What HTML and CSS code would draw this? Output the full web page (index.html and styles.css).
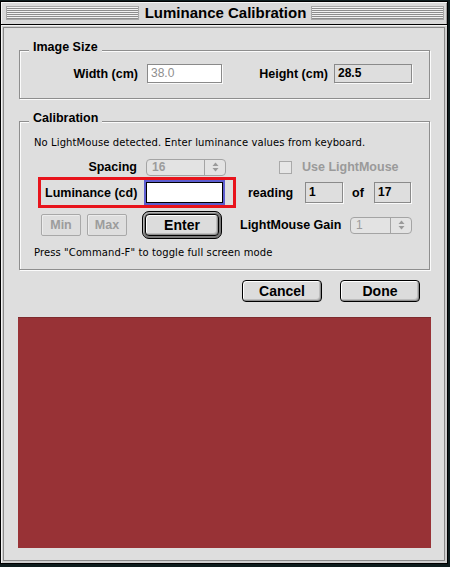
FILE: index.html
```html
<!DOCTYPE html>
<html>
<head>
<meta charset="utf-8">
<title>Luminance Calibration</title>
<link rel="stylesheet" href="styles.css">
</head>
<body>
<div class="window">
  <div class="titlebar">
    <div class="stripes"></div>
    <div class="title">Luminance Calibration</div>
    <div class="stripes"></div>
  </div>
  <div class="frame">
    <div class="panel">
      <fieldset class="group group-size">
        <legend>Image Size</legend>
        <div class="size-body">
          <span class="lbl lbl-width">Width (cm)</span>
          <div class="field field-white field-dim">38.0</div>
          <span class="lbl lbl-height">Height (cm)</span>
          <div class="field field-height">28.5</div>
        </div>
      </fieldset>

      <fieldset class="group group-cal">
        <legend>Calibration</legend>
        <div class="cal-body">
          <p class="note">No LightMouse detected. Enter luminance values from keyboard.</p>

          <div class="row row-spacing">
            <span class="lbl lbl-spacing">Spacing</span>
            <div class="popup popup-spacing">
              <span class="popup-val">16</span>
              <span class="popup-arrows">
                <svg width="7" height="10" viewBox="0 0 7 10"><polygon points="0.5,4 3.5,0.5 6.5,4" fill="#9a9a9a"/><polygon points="0.5,6 3.5,9.5 6.5,6" fill="#9a9a9a"/></svg>
              </span>
            </div>
            <span class="checkbox"></span>
            <span class="lbl lbl-dim">Use LightMouse</span>
          </div>

          <div class="row row-lum">
            <div class="highlight">
              <span class="lbl lbl-lum">Luminance (cd)</span>
              <div class="field field-focus"></div>
            </div>
            <span class="lbl lbl-reading">reading</span>
            <div class="field field-num field-one">1</div>
            <span class="lbl lbl-of">of</span>
            <div class="field field-num field-total">17</div>
          </div>

          <div class="row row-buttons">
            <button class="btn btn-disabled btn-min">Min</button>
            <button class="btn btn-disabled btn-max">Max</button>
            <div class="default-ring"><button class="btn btn-enter">Enter</button></div>
            <span class="lbl lbl-gain">LightMouse Gain</span>
            <div class="popup popup-gain">
              <span class="popup-val popup-val-thin">1</span>
              <span class="popup-arrows">
                <svg width="7" height="10" viewBox="0 0 7 10"><polygon points="0.5,4 3.5,0.5 6.5,4" fill="#9a9a9a"/><polygon points="0.5,6 3.5,9.5 6.5,6" fill="#9a9a9a"/></svg>
              </span>
            </div>
          </div>

          <p class="note note-last">Press "Command-F" to toggle full screen mode</p>
        </div>
      </fieldset>

      <div class="actions">
        <button class="btn btn-action">Cancel</button>
        <button class="btn btn-action">Done</button>
      </div>

      <div class="preview"></div>
    </div>
  </div>
</div>
</body>
</html>
```

FILE: styles.css
```css
* { box-sizing: border-box; }

html, body {
  margin: 0;
  padding: 0;
}

body {
  width: 450px;
  height: 567px;
  overflow: hidden;
  background: #0e1c1d;
  font-family: "Liberation Sans", Arial, sans-serif;
  color: #000;
}

.window {
  margin-top: 1px;
  width: 448px;
  height: 563px;
  border: 1px solid #000;
  background: #dcdcdc;
  display: flex;
  flex-direction: column;
}

/* ---------- title bar ---------- */
.titlebar {
  height: 23px;
  flex: none;
  display: flex;
  align-items: center;
  padding: 0 3px 0 5px;
  border-bottom: 1px solid #000;
  background: #d9d9d9;
  box-shadow: inset 1px 1px 0 #f6f6f6, inset -1px 0 0 #a0a0a0;
}

.stripes {
  flex: 1;
  height: 14px;
  border: 1px solid #a8a8a8;
  background: repeating-linear-gradient(to bottom, #f2f2f2 0 1px, #8e8e8e 1px 2px);
}

.title {
  padding: 0 5px 0 6px;
  font: bold 15px/20px "Liberation Sans", Arial, sans-serif;
  white-space: nowrap;
}

/* ---------- frame & panel ---------- */
.frame {
  flex: 1;
  display: flex;
  padding: 2px;
  background: #cfcfcf;
  box-shadow: inset 1px 1px 0 #f4f4f4;
}

.panel {
  flex: 1;
  display: flex;
  flex-direction: column;
  border: 1px solid #8a8a8a;
  background: #dedede;
}

/* ---------- group boxes ---------- */
.group {
  margin: 0 14px 0 15px;
  padding: 0;
  min-inline-size: 0;
  border: 1px solid #8e8e8e;
  box-shadow: 1px 1px 0 #fbfbfb, inset 1px 1px 0 #fbfbfb;
}

.group legend {
  margin-left: 9px;
  padding: 0 4px 6px;
  background: #dedede;
  font: bold 12.5px/14px "Liberation Sans", Arial, sans-serif;
}

.group-size { margin-top: 12px; }
.group-cal { margin-top: 12px; }

.size-body {
  display: flex;
  align-items: center;
  padding: 4px 0 15px;
}

.lbl {
  font: bold 12.5px/14px "Liberation Sans", Arial, sans-serif;
  white-space: nowrap;
}

.lbl-width {
  width: 118px;
  text-align: right;
  margin-right: 9px;
}

.lbl-height {
  width: 106px;
  text-align: right;
  margin-right: 6px;
}

/* ---------- text fields ---------- */
.field {
  height: 19px;
  border: 1px solid #8a8a8a;
  box-shadow: 1px 1px 0 #fafafa;
  padding-left: 3px;
  font: bold 12px/17px "Liberation Sans", Arial, sans-serif;
  background: #dedede;
}

.field-white {
  width: 75px;
  background: #fff;
}

.field-dim {
  color: #8e8e8e;
  font-weight: normal;
}

.field-height { width: 78px; }

.field-num {
  height: 21px;
  line-height: 19px;
}

.field-one { width: 38px; }
.field-total { width: 37px; }

.field-focus {
  width: 77px;
  height: 21px;
  background: #fff;
  border: 1px solid #000;
  box-shadow: 0 0 0 2px #5d5dcf;
}

/* ---------- calibration ---------- */
.cal-body { padding: 5px 0 9px; }

.note {
  margin: 0 0 0 14px;
  font: 10px/14px "DejaVu Sans", Verdana, sans-serif;
  letter-spacing: 0.1px;
  white-space: nowrap;
}

.note-last { margin-top: 7px; }

.row {
  display: flex;
  align-items: center;
}

.row-spacing {
  height: 20px;
  margin-top: 7px;
}

.lbl-spacing {
  width: 117px;
  text-align: right;
  margin-right: 9px;
}

.popup {
  display: flex;
  height: 17px;
  border: 1px solid #a4a4a4;
  border-radius: 4px;
  background: #e3e3e3;
}

.popup-spacing { width: 80px; }
.popup-gain { width: 62px; }

.popup-val {
  flex: 1;
  padding-left: 5px;
  font: bold 12px/15px "Liberation Sans", Arial, sans-serif;
  color: #9c9c9c;
}

.popup-val-thin { font-weight: normal; }

.popup-arrows {
  width: 21px;
  border-left: 1px solid #a4a4a4;
  display: flex;
  align-items: center;
  justify-content: center;
}

.checkbox {
  width: 13px;
  height: 13px;
  margin-left: 53px;
  margin-right: 10px;
  border: 1px solid #a9a9a9;
  background: #e6e6e6;
}

.lbl-dim { color: #9a9a9a; }

.highlight {
  display: flex;
  align-items: center;
  width: 198px;
  margin-left: 18px;
  padding: 2px 10px 2px 4px;
  border: 3px solid #e8141c;
}

.lbl-lum {
  flex: 1;
  text-align: right;
  margin-right: 9px;
}

.lbl-reading {
  width: 57px;
  margin-left: 12px;
}

.lbl-of {
  width: 31px;
  padding-left: 9px;
}

/* ---------- buttons ---------- */
.row-buttons { margin-top: 3px; }

.btn {
  height: 22px;
  padding: 0;
  border: 1px solid #000;
  border-radius: 4px;
  background: #dcdcdc;
  box-shadow: inset 1px 1px 0 #fff, inset -1px -1px 0 #8e8e8e, inset -2px -2px 0 #bdbdbd;
  font: bold 14px/20px "Liberation Sans", Arial, sans-serif;
  color: #000;
}

.btn-disabled {
  width: 40px;
  border-color: #a8a8a8;
  border-radius: 2px;
  background: #dedede;
  box-shadow: inset 1px 1px 0 #ececec;
  color: #9c9c9c;
  font-size: 12.5px;
}

.btn-min { margin-left: 21px; }
.btn-max { margin-left: 6px; }

.default-ring {
  display: flex;
  margin-left: 15px;
  padding: 2px;
  border: 1px solid #000;
  border-radius: 7px;
  background: #7a7a7a;
  box-shadow: inset 1px 1px 0 #b4b4b4;
}

.btn-enter { width: 74px; }

.lbl-gain {
  width: 110px;
  margin-left: 18px;
}

/* ---------- actions ---------- */
.actions {
  display: flex;
  justify-content: flex-end;
  gap: 18px;
  margin: 10px 24px 0 0;
}

.btn-action { width: 80px; }

/* ---------- preview ---------- */
.preview {
  height: 231px;
  margin: 15px 13px 0 14px;
  background: #983236;
  box-shadow: inset 0 1px 0 #7e2a2d;
}
```
